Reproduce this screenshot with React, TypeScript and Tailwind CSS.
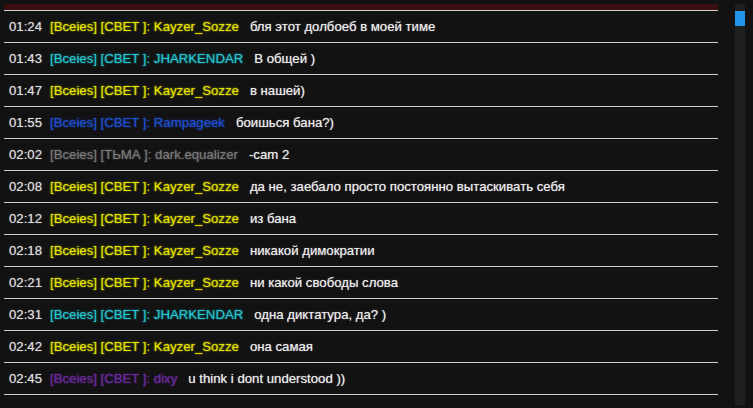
import React from "react";

type Row = { t: string; name: string; c: string; msg: string };

const Y = "text-[#e6e600] [text-shadow:0_0_2px_rgba(230,230,0,0.8)]";
const C = "text-[#22c8d2] [text-shadow:0_0_2px_rgba(34,200,210,0.8)]";
const B = "text-[#1f4fd0] [text-shadow:0_0_2px_rgba(31,79,208,0.9)]";
const G = "text-[#7a7a7a] [text-shadow:0_0_2px_rgba(122,122,122,0.8)]";
const P = "text-[#6b2a9e] [text-shadow:0_0_2px_rgba(107,42,158,0.9)]";

const rows: Row[] = [
  { t: "01:24", name: "[Bceies] [CBET ]: Kayzer_Sozze", c: Y, msg: "бля этот долбоеб в моей тиме" },
  { t: "01:43", name: "[Bceies] [CBET ]: JHARKENDAR", c: C, msg: "В общей )" },
  { t: "01:47", name: "[Bceies] [CBET ]: Kayzer_Sozze", c: Y, msg: "в нашей)" },
  { t: "01:55", name: "[Bceies] [CBET ]: Rampageek", c: B, msg: "боишься бана?)" },
  { t: "02:02", name: "[Bceies] [ТЬМА ]: dark.equalizer", c: G, msg: "-cam 2" },
  { t: "02:08", name: "[Bceies] [CBET ]: Kayzer_Sozze", c: Y, msg: "да не, заебало просто постоянно вытаскивать себя" },
  { t: "02:12", name: "[Bceies] [CBET ]: Kayzer_Sozze", c: Y, msg: "из бана" },
  { t: "02:18", name: "[Bceies] [CBET ]: Kayzer_Sozze", c: Y, msg: "никакой димократии" },
  { t: "02:21", name: "[Bceies] [CBET ]: Kayzer_Sozze", c: Y, msg: "ни какой свободы слова" },
  { t: "02:31", name: "[Bceies] [CBET ]: JHARKENDAR", c: C, msg: "одна диктатура, да? )" },
  { t: "02:42", name: "[Bceies] [CBET ]: Kayzer_Sozze", c: Y, msg: "она самая" },
  { t: "02:45", name: "[Bceies] [CBET ]: dixy", c: P, msg: "u think i dont understood ))" },
];

export default function App() {
  return (
    <div
      className="w-[753px] h-[408px] bg-[#121212] flex overflow-hidden"
      style={{ fontFamily: '"Liberation Sans", Arial, sans-serif' }}
    >
      <div className="w-[714px] ml-[4px] mt-[4px] flex flex-col">
        <div className="h-[6px] bg-[#3a0e0f]" />
        {rows.map((r, i) => (
          <div
            key={i}
            className="h-[32px] border-t border-[#d0d0d0] flex items-center pl-[5px] text-[13.2px] whitespace-nowrap"
          >
            <span className="text-[#dcdcdc] mr-[8px] [text-shadow:0_0_1px_rgba(220,220,220,0.7)]">{r.t}</span>
            <span className={`${r.c} mr-[11px]`}>{r.name}</span>
            <span className="text-[#ececec] [text-shadow:0_0_1px_rgba(236,236,236,0.7)]">{r.msg}</span>
          </div>
        ))}
        <div className="border-t border-[#d0d0d0]" />
      </div>
      <div className="ml-[17px] mt-[4px] w-[10px] h-[401px] bg-[#1f1f1f] flex flex-col">
        <div className="mt-[7px] h-[15px] bg-[#2196e8]" />
      </div>
    </div>
  );
}
